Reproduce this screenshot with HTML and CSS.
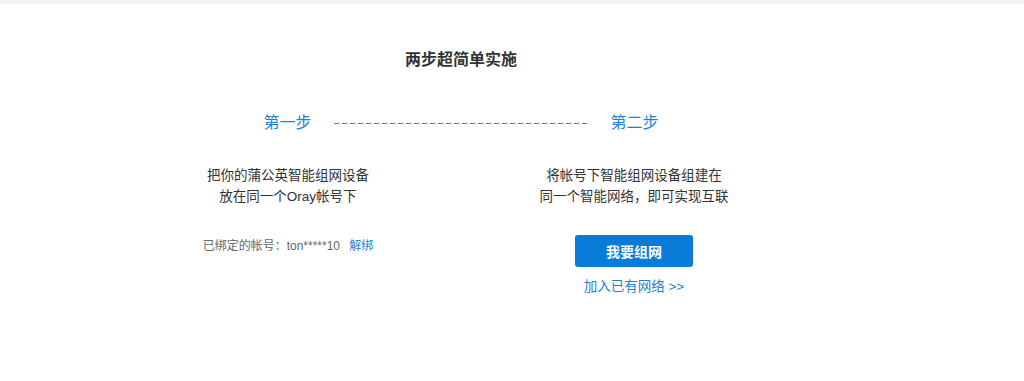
FILE: index.html
```html
<!DOCTYPE html>
<html lang="zh-CN">
<head>
    <meta charset="UTF-8">
    <meta name="viewport" content="width=device-width, initial-scale=1.0">
    <title>两步超简单实施</title>
    <link rel="stylesheet" href="styles.css">
</head>
<body>
    <div class="topbar"></div>

    <div class="panel">
        <h2 class="title">两步超简单实施</h2>

        <div class="steps-head">
            <span class="step-label">第一步</span>
            <span class="step-line"></span>
            <span class="step-label">第二步</span>
        </div>

        <div class="steps">
            <div class="step">
                <p class="desc">把你的蒲公英智能组网设备<br>放在同一个Oray帐号下</p>
                <p class="bound">已绑定的帐号：ton*****10 <a href="#" class="link">解绑</a></p>
            </div>
            <div class="step">
                <p class="desc">将帐号下智能组网设备组建在<br>同一个智能网络，即可实现互联</p>
                <button class="btn">我要组网</button>
                <a href="#" class="join">加入已有网络 &gt;&gt;</a>
            </div>
        </div>
    </div>
</body>
</html>
```

FILE: styles.css
```css
html, body {
    margin: 0;
    background: #ffffff;
}

body {
    font-family: "Liberation Sans", "Noto Sans CJK SC", sans-serif;
    color: #333333;
}

.topbar {
    height: 4px;
    background-color: #f3f3f3;
}

.panel {
    width: 692px;
    margin-left: 115px;
    padding-top: 44px;
}

.title {
    margin: 0;
    font-size: 16px;
    line-height: 24px;
    font-weight: bold;
    text-align: center;
    color: #333333;
}

.steps-head {
    display: flex;
    justify-content: center;
    align-items: center;
    gap: 22px;
    margin-top: 39px;
}

.step-label {
    font-size: 16px;
    line-height: 24px;
    color: #1f7fd6;
}

.step-line {
    width: 255px;
    height: 1px;
    background: repeating-linear-gradient(to right, #2a8ae0 0, #2a8ae0 5px, transparent 5px, transparent 8px);
}

.steps {
    display: grid;
    grid-template-columns: 346px 346px;
    margin-top: 30px;
}

.step {
    display: flex;
    flex-direction: column;
    align-items: center;
    text-align: center;
}

.desc {
    margin: 0;
    font-size: 13.5px;
    line-height: 21px;
    color: #333333;
}

.bound {
    margin: 29px 0 0;
    font-size: 12px;
    line-height: 20px;
    color: #666666;
}

.link {
    margin-left: 6px;
    color: #1f7fd6;
    text-decoration: none;
}

.btn {
    margin-top: 28px;
    width: 118px;
    height: 32px;
    border: none;
    border-radius: 3px;
    background-color: #0a7bd8;
    color: #ffffff;
    font-family: "Liberation Sans", "Noto Sans CJK SC", sans-serif;
    font-size: 14px;
    font-weight: bold;
    cursor: pointer;
}

.join {
    margin-top: 10px;
    font-size: 13.5px;
    line-height: 20px;
    color: #1f7fd6;
    text-decoration: none;
}
```
